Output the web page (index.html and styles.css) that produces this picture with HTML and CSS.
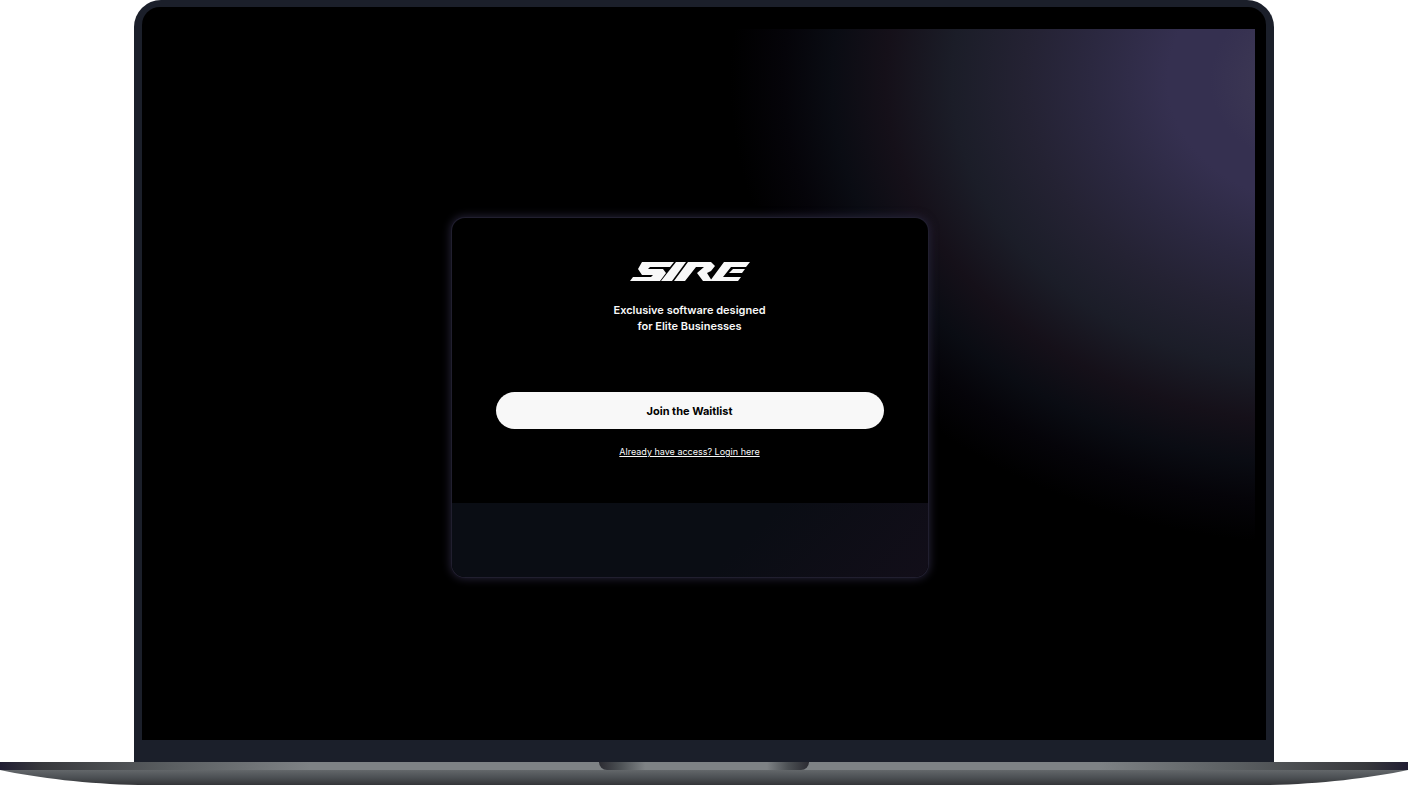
FILE: index.html
```html
<!DOCTYPE html>
<html lang="en">
  <head>
    <meta charset="UTF-8" />
    <meta name="viewport" content="width=device-width, initial-scale=1.0" />
    <title>SIRE</title>
    <link rel="stylesheet" href="styles.css" />
  </head>
  <body>
    <div class="laptop">
      <div class="lid">
        <div class="screen">
          <main class="wallpaper">
            <div class="card">
              <div class="card-main">
                <svg class="logo" viewBox="0 0 120 19" role="img" aria-label="SIRE">
                  <path d="M12 0H44L40 5H20L18 7H33L36 11L30 19H0L3 15H21L23 13H12L8 7Z" />
                  <path d="M46 0H56L42 19H31Z" />
                  <path d="M58 0H81L85 4L81 9L77 11L82 19H73L67 11L74 5H66L55 19H44Z" />
                  <path d="M94 0H120L116 5H101L93 15H111L108 19H80Z" />
                  <path d="M103 7H115L112 11H99Z" />
                </svg>
                <p class="tagline">Exclusive software designed<br />for Elite Businesses</p>
                <button class="join" type="button">Join the Waitlist</button>
                <a class="login" href="#">Already have access? Login here</a>
              </div>
              <div class="card-footer"></div>
            </div>
          </main>
        </div>
      </div>
      <div class="base">
        <div class="deck"><div class="notch"></div></div>
        <svg class="underside" viewBox="0 0 1408 15" preserveAspectRatio="none" aria-hidden="true">
          <defs>
            <linearGradient id="under" x1="0" y1="0" x2="0" y2="1">
              <stop offset="0" stop-color="#63676a" />
              <stop offset="0.5" stop-color="#4c5054" />
              <stop offset="1" stop-color="#343538" />
            </linearGradient>
          </defs>
          <path d="M0 0H1408C1370 8 1320 14 1270 15H138C88 14 38 8 0 0Z" fill="url(#under)" />
        </svg>
      </div>
    </div>
  </body>
</html>
```

FILE: styles.css
```css
* {
  margin: 0;
  padding: 0;
  box-sizing: border-box;
}
body {
  background: #fff;
  font-family: Inter, sans-serif;
}
.laptop {
  min-height: 100vh;
  display: flex;
  flex-direction: column;
}
.lid {
  flex: 1;
  display: flex;
  width: 81%;
  margin: 0 auto;
  padding: 7px 8px 22px;
  background: #1b1f2a;
  border-radius: 27px 27px 0 0;
}
.screen {
  flex: 1;
  display: flex;
  padding: 22px 11px 0 0;
  background: #000;
  border-radius: 18px 18px 0 0;
}
.wallpaper {
  flex: 1;
  display: flex;
  justify-content: center;
  align-items: center;
  padding: 26px 18px 0 0;
  background: radial-gradient(
    600px 465px at calc(100% + 75px) 51px,
    #3b3653 12%,
    #353050 20%,
    #353050 27%,
    #2b2840 40%,
    #242233 51%,
    #1b1d28 63%,
    #151019 74%,
    #0a0c13 83%,
    #050409 91%,
    #000 100%
  );
}
.card {
  width: 476px;
  border-radius: 13px;
  overflow: hidden;
  background: #000;
  box-shadow: 0 0 0 1px #211f2f, 0 0 8px 2px #242136;
}
.card-main {
  display: flex;
  flex-direction: column;
  align-items: center;
  height: 285px;
  padding: 44px 44px 0;
}
.logo {
  width: 120px;
  height: 19px;
  fill: #f8f8f8;
}
.tagline {
  margin-top: 21px;
  color: #f8f8f8;
  font-size: 11px;
  font-weight: 600;
  line-height: 16px;
  text-align: center;
}
.join {
  width: 100%;
  height: 37px;
  margin-top: 58px;
  border: 0;
  border-radius: 19px;
  background: #f8f8f8;
  color: #000;
  font-family: inherit;
  font-size: 11px;
  font-weight: 700;
  cursor: pointer;
}
.login {
  margin-top: 15px;
  color: #f8f8f8;
  font-size: 9px;
  line-height: 16px;
}
.card-footer {
  height: 74px;
  background: linear-gradient(135deg, #0a0d14 60%, #120e19);
}
.deck {
  height: 8px;
  background: linear-gradient(90deg, #211e33, #38393d 3%, #5a5e61 12%, #7e8285 22%, #7e8285 78%, #5a5e61 88%, #38393d 97%, #211e33);
}
.notch {
  width: 210px;
  height: 8px;
  margin: 0 auto;
  border-radius: 0 0 8px 8px;
  background: linear-gradient(90deg, #2b2b32, #4c5054 10%, #7e8285 22%, #7e8285 80%, #4c5054 90%, #2b2b32);
}
.underside {
  display: block;
  width: 100%;
  height: 15px;
}
```
